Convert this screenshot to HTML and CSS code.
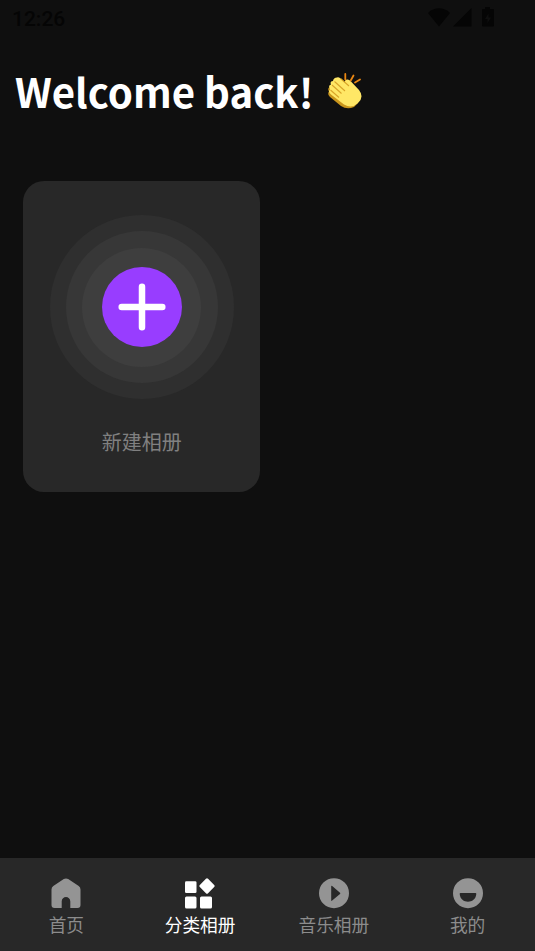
FILE: index.html
```html
<!DOCTYPE html>
<html lang="zh-CN">
<head>
<meta charset="utf-8">
<title>分类相册</title>
<link rel="stylesheet" href="styles.css">
</head>
<body>
<div class="app">
  <header class="status">
    <span class="time">12:26</span>
    <svg class="status-icons" width="68" height="22" viewBox="0 0 68 22">
      <path d="M0 6C6 -.2 16 -.2 22 6L11 19.500Z"/>
      <path d="M25 19.500H43.500V1Z"/>
      <path fill-rule="evenodd" d="M57 0H62V2H65Q66 2 66 3V18.500Q66 19.500 65 19.500H55Q54 19.500 54 18.500V3Q54 2 55 2H57ZM60.500 6.500L57 12H59.500V16L63 10.500H60.500Z"/>
    </svg>
  </header>
  <main class="content">
    <h1 class="title"><span>Welcome back!</span>
      <svg class="wave" width="36" height="38" viewBox="0 0 36 38">
        <path fill="#c9951c" d="M3 15Q0 16 2 19.500Q0 22 3 25L14 34Q20 38 27 35L31 31L8 13Z"/>
        <path fill="#ffe766" d="M3 17Q.8 13.500 4 12.500Q2.500 9 6 9Q6.500 5.500 10 5.500Q11.500 4.800 13.500 6.500L18 10.500Q17.500 7.500 20 7.500Q22 7.200 24 9.500L32 18Q37.500 25 31 31Q25 37 17 32.500L4 22.500Q.5 19 3 18Z"/>
        <path class="fingers" d="M5 13L14.500 21.500M7.500 9.500L18 19M13.500 6.500L22 14M3.500 18L12 25.500"/>
        <path class="sparks" d="M18.300 2V7.500M26.500 3.500L23.700 8.500M33 7.500L28 10.500"/>
      </svg>
    </h1>
    <section class="card">
      <div class="ring outer"><div class="ring middle"><div class="ring inner"><div class="ring add">
        <svg class="plus" width="48" height="48" viewBox="0 0 48 48"><path d="M24 3.700V44.300M3.700 24H44.300"/></svg>
      </div></div></div></div>
      <p class="card-label">新建相册</p>
    </section>
  </main>
  <nav class="tabs">
    <a class="tab">
      <svg width="30" height="31" viewBox="0 0 30 31"><path d="M12.800 1.100Q15 -.2 17.200 1.100L27.700 8Q29.500 9.300 29.500 11.500V27Q29.500 30 26.500 30H19.300V23.500C19.300 17.500 10.700 17.500 10.700 23.500V30H3.500Q.5 30 .5 27V11.500Q.5 9.300 2.300 8Z"/></svg>
      <span>首页</span>
    </a>
    <a class="tab active">
      <svg width="30" height="31" viewBox="0 0 30 31"><rect x="0" y="3.300" width="11.500" height="11.700" rx="1.300"/><rect x="0" y="18.500" width="11.500" height="12" rx="1.500"/><rect x="15" y="18.500" width="12" height="12" rx="1.500"/><rect x="16.200" y="2.200" width="11.600" height="11.600" rx="1.500" transform="rotate(45 22 8)"/></svg>
      <span>分类相册</span>
    </a>
    <a class="tab">
      <svg width="30" height="31" viewBox="0 0 30 31"><path fill-rule="evenodd" d="M15 .2A15 15 0 1 1 15 30.200A15 15 0 1 1 15 .2ZM12.200 8.500V22.200Q12.200 23.500 13.200 22.600L21 16Q21.700 15.300 21 14.700L13.200 8Q12.200 7.200 12.200 8.500Z"/></svg>
      <span>音乐相册</span>
    </a>
    <a class="tab">
      <svg width="30" height="31" viewBox="0 0 30 31"><path fill-rule="evenodd" d="M15 .2A15 15 0 1 1 15 30.200A15 15 0 1 1 15 .2ZM7.500 15Q6.600 15 6.700 16C7.500 26.300 22.500 26.300 23.300 16Q23.400 15 22.500 15Z"/></svg>
      <span>我的</span>
    </a>
  </nav>
</div>
</body>
</html>
```
FILE: styles.css
```css
body { margin: 0; }
.app {
  height: 951px;
  display: flex;
  flex-direction: column;
  background: #0f0f0f;
  font-family: "Noto Sans CJK SC", sans-serif;
  overflow: hidden;
}
.status {
  height: 38px;
  box-sizing: border-box;
  padding: 7px 39px 0 12px;
  display: flex;
  justify-content: space-between;
  color: #050505;
}
.time { font: 500 21px/24px Roboto, sans-serif; }
.status-icons { fill: #050505; }
.content { flex: 1; padding: 21px 15px 0; }
.title {
  margin: 0;
  height: 64px;
  display: flex;
  align-items: center;
  gap: 13px;
  font-size: 40.200px;
  line-height: 64px;
  font-weight: 700;
  color: #fff;
  white-space: nowrap;
}
.wave { margin-top: -1px; }
.fingers { stroke: #d9a429; stroke-width: 1.1; fill: none; }
.sparks { stroke: #e98612; stroke-width: 1.8; stroke-linecap: round; fill: none; }
.card {
  margin: 58px 0 0 8px;
  width: 236.500px;
  height: 311px;
  box-sizing: border-box;
  padding: 34px 0 0 1px;
  border-radius: 21px;
  background: #282828;
  display: flex;
  flex-direction: column;
  align-items: center;
}
.ring {
  border-radius: 50%;
  display: flex;
  align-items: center;
  justify-content: center;
}
.outer { width: 184px; height: 184px; background: #2f2f2f; }
.middle { width: 152px; height: 152px; background: #373737; }
.inner { width: 119px; height: 119px; background: #3e3e3e; }
.add { width: 80px; height: 80px; background: #983dff; }
.plus { stroke: #fff; stroke-width: 6.5; stroke-linecap: round; }
.card-label {
  margin: 28px 0 0;
  font-size: 20px;
  line-height: 30px;
  color: #808080;
}
.tabs {
  height: 93px;
  background: #282828;
  display: grid;
  grid-template-columns: repeat(4, 1fr);
}
.tab {
  padding: 20px 1px 0 0;
  display: flex;
  flex-direction: column;
  align-items: center;
  font-size: 17.700px;
  line-height: 30px;
  color: #8c8c8c;
  fill: #949494;
}
.active { color: #fff; fill: #fff; }
```
